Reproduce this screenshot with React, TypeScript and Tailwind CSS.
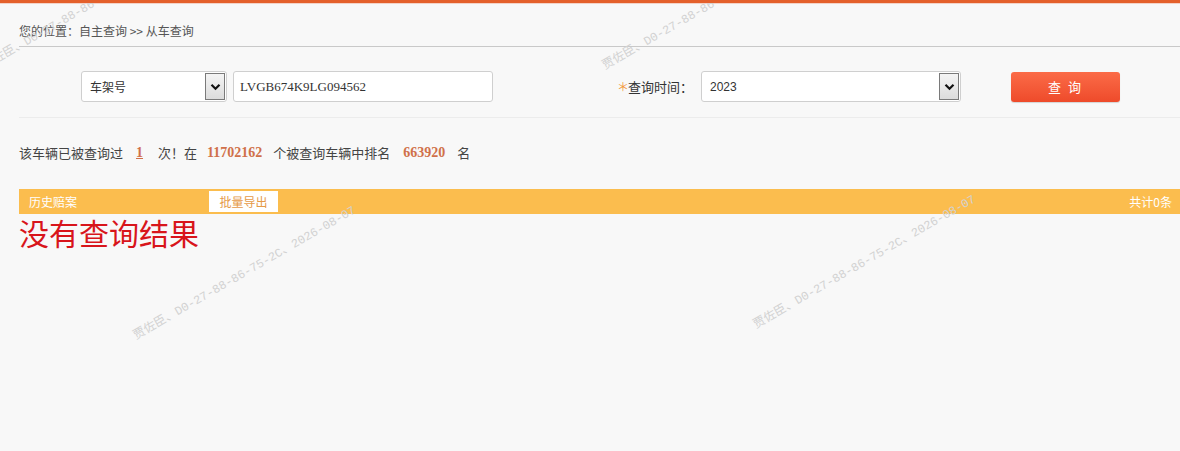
import React from "react"

const cjk = "font-['Microsoft_YaHei','Noto_Sans_CJK_SC',sans-serif]"

// watermark start points (bottom-left of each rotated line)
const marks = [
   { x: -13, y: 73 },
   { x: 607, y: 73 },
   { x: 138, y: 343 },
   { x: 758, y: 332 },
]

function DropArrow() {
   return (
      <div className="flex items-center justify-center w-[20px] h-[27px] border border-[#7a7a7a] bg-gradient-to-b from-[#f4f4f4] to-[#dcdcdc]">
         <svg width="11" height="8" viewBox="0 0 11 8">
            <path d="M1.5 1.8 L5.5 5.8 L9.5 1.8" fill="none" stroke="#111" strokeWidth="2.2" />
         </svg>
      </div>
   )
}

function SelectBox(props: { value: string; width: string; text: string }) {
   return (
      <div className={`flex items-center justify-between ${props.width} h-[31px] bg-white border border-[#cfcfcf] rounded-[3px] pl-[8px] pr-[1px]`}>
         <span className={props.text}>{props.value}</span>
         <DropArrow />
      </div>
   )
}

export default function App() {
   return (
      <div className={`relative min-h-[451px] overflow-hidden bg-[#f8f8f8] border-t-[3px] border-[#e4602b] ${cjk}`}>
         <div className="h-px bg-[#f3d3c8]" />
         <div className="pl-[19px]">
            <div className="pt-[19px] pb-[7px] leading-[16px] text-[12px] text-[#555] border-b border-[#c9c9c9]">
               您的位置：自主查询 &gt;&gt; 从车查询
            </div>

            <div className="flex items-center pt-[24px] pb-[15px] border-b border-[#ececec]">
               <div className="ml-[62px]">
                  <SelectBox value="车架号" width="w-[146px]" text="text-[12px] text-[#333]" />
               </div>
               <div className="ml-[6px] flex items-center w-[260px] h-[31px] bg-white border border-[#cfcfcf] rounded-[3px] pl-[6px] font-['Liberation_Serif',serif] text-[13px] text-[#333]">
                  LVGB674K9LG094562
               </div>
               <div className="ml-[124px] w-[84px] flex items-center text-[13px] text-[#333]">
                  <span className="text-[#f39a3c] text-[12px] mr-[1px]">＊</span>
                  <span className="-ml-[2px]">查询时间：</span>
               </div>
               <SelectBox value="2023" width="w-[260px]" text="text-[12px] text-[#333] font-['Liberation_Sans',sans-serif]" />
               <button className="ml-[50px] w-[109px] h-[30px] rounded-[3px] bg-gradient-to-b from-[#fb6b47] to-[#ee4a2a] text-white text-[13px] tracking-[2px] shadow-[0_1px_1px_rgba(0,0,0,0.15)]">
                  查 询
               </button>
            </div>

            <div className="flex items-center pt-[24px] leading-[22px] text-[13px] text-[#444]">
               <span>该车辆已被查询过</span>
               <span className="ml-[13px] underline font-bold text-[14px] text-[#d0704a] font-['Liberation_Serif',serif]">1</span>
               <span className="ml-[15px]">次！在</span>
               <span className="ml-[10px] font-bold text-[14px] text-[#d0704a] font-['Liberation_Serif',serif]">11702162</span>
               <span className="ml-[11px]">个被查询车辆中排名</span>
               <span className="ml-[13px] font-bold text-[14px] text-[#d0704a] font-['Liberation_Serif',serif]">663920</span>
               <span className="ml-[12px]">名</span>
            </div>

            <div className="mt-[25px] flex items-center justify-between h-[25px] bg-[#fbbd4e] text-[12px] text-white">
               <div className="flex items-center">
                  <span className="ml-[10px] w-[180px]">历史赔案</span>
                  <button className="h-[21px] w-[69px] bg-white text-[#e59a48] text-[12px]">批量导出</button>
               </div>
               <span className="mr-[8px]">共计0条</span>
            </div>

            <div className="text-[30px] leading-[36px] text-[#d8151b]">没有查询结果</div>
         </div>

         {marks.map((m, i) => (
            <span
               key={i}
               className="pointer-events-none absolute whitespace-nowrap origin-bottom-left -rotate-30 leading-[14px] text-[12px] text-[#d2d2d2] font-['Liberation_Mono','Noto_Sans_CJK_SC',monospace]"
               style={{ left: m.x, top: m.y - 17 }}>
               贾佐臣、D0-27-88-86-75-2C、2026-08-07
            </span>
         ))}
      </div>
   )
}
